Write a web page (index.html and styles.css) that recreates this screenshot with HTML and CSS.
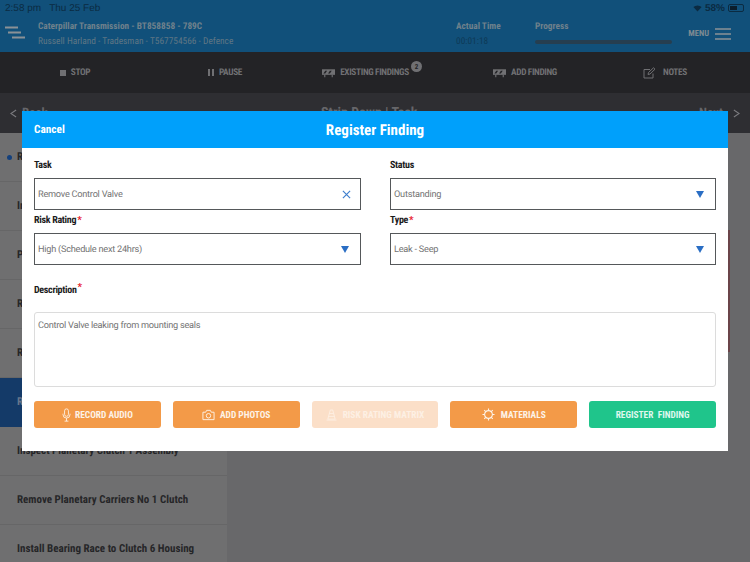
FILE: index.html
```html
<!DOCTYPE html>
<html lang="en">
<head>
    <meta charset="UTF-8">
    <meta name="viewport" content="width=device-width, initial-scale=1.0">
    <title>Register Finding</title>
    <link rel="stylesheet" href="styles.css">
</head>
<body>
    <div class="page">
        <header class="top">
            <div class="status-bar">
                <span class="clock">2:58 pm</span>
                <span class="date">Thu 25 Feb</span>
                <span class="status-right">
                    <svg class="wifi" viewBox="0 0 12 9"><path d="M6 8.5 L0.5 2.6 A8 8 0 0 1 11.5 2.6 Z"/></svg>
                    <span class="battery-text">58%</span>
                    <span class="battery"><span class="battery-fill"></span></span>
                </span>
            </div>
            <div class="job-bar">
                <svg class="job-icon" viewBox="0 0 21 14"><path d="M0 1.5H13M3 6.5H16M7 11.5H20"/></svg>
                <div class="job-text">
                    <div class="job-title">Caterpillar Transmission - BT858858 - 789C</div>
                    <div class="job-sub">Russell Harland - Tradesman - T567754566 - Defence</div>
                </div>
                <div class="time">
                    <div class="job-title">Actual Time</div>
                    <div class="time-value">00:01:18</div>
                </div>
                <div class="progress">
                    <div class="job-title">Progress</div>
                    <div class="progress-track"></div>
                </div>
                <div class="menu">
                    <span>MENU</span>
                    <svg class="menu-icon" viewBox="0 0 16 12"><path d="M0 1H16M0 6H16M0 11H16"/></svg>
                </div>
            </div>
        </header>

        <nav class="toolbar">
            <div class="tool"><span class="stop-icon"></span>STOP</div>
            <div class="tool"><span class="pause-icon"></span>PAUSE</div>
            <div class="tool tool-findings">
                <svg class="barrier" viewBox="0 0 14 10"><path class="solid" d="M0 1H14V7H0Z"/><path class="cut" d="M1.5 5.5H3.5L5.5 2.5H3.5ZM6.5 5.5H8.5L10.5 2.5H8.5Z"/><path class="leg" d="M3 7V9.5M11 7V9.5"/></svg>
                EXISTING FINDINGS
                <span class="badge">2</span>
            </div>
            <div class="tool">
                <svg class="barrier" viewBox="0 0 14 10"><path class="solid" d="M0 1H14V7H0Z"/><path class="cut" d="M1.5 5.5H3.5L5.5 2.5H3.5ZM6.5 5.5H8.5L10.5 2.5H8.5Z"/><path class="leg" d="M3 7V9.5M11 7V9.5"/></svg>
                ADD FINDING
            </div>
            <div class="tool tool-notes">
                <svg class="notes-icon" viewBox="0 0 13 12"><path d="M10 6.5V11H1V2.5H7"/><path d="M5 7.5L5.5 5.5L10.5 .8L12 2.2L7 7Z"/></svg>
                NOTES
            </div>
        </nav>

        <div class="subheader">
            <div class="sub-side">
                <svg class="chevron" viewBox="0 0 8 10"><path d="M7 1L1 5L7 9"/></svg>
                <span>Back</span>
            </div>
            <div class="sub-title">Strip Down | Task</div>
            <div class="sub-side">
                <span>Next</span>
                <svg class="chevron" viewBox="0 0 8 10"><path d="M1 1L7 5L1 9"/></svg>
            </div>
        </div>

        <div class="content">
            <ul class="task-list">
                <li class="task task-current"><span class="dot"></span>R</li>
                <li class="task">In</li>
                <li class="task">P</li>
                <li class="task">R</li>
                <li class="task">R</li>
                <li class="task task-selected">R</li>
                <li class="task">Inspect Planetary Clutch 1 Assembly</li>
                <li class="task">Remove Planetary Carriers No 1 Clutch</li>
                <li class="task">Install Bearing Race to Clutch 6 Housing</li>
            </ul>
            <div class="main-panel">
                <div class="alert-card"></div>
            </div>
        </div>
    </div>

    <!-- Modal -->
    <div class="modal">
        <div class="modal-head">
            <span class="cancel">Cancel</span>
            <span class="modal-title">Register Finding</span>
        </div>
        <div class="modal-body">
            <div class="form-grid">
                <div class="field">
                    <label>Task</label>
                    <div class="input">
                        Remove Control Valve
                        <svg class="clear" viewBox="0 0 10 10"><path d="M1 1L9 9M9 1L1 9"/></svg>
                    </div>
                </div>
                <div class="field">
                    <label>Status</label>
                    <div class="input">Outstanding<span class="arrow"></span></div>
                </div>
                <div class="field">
                    <label>Risk Rating<span class="req">*</span></label>
                    <div class="input">High (Schedule next 24hrs)<span class="arrow"></span></div>
                </div>
                <div class="field">
                    <label>Type<span class="req">*</span></label>
                    <div class="input">Leak - Seep<span class="arrow"></span></div>
                </div>
            </div>
            <label class="desc-label">Description<span class="req req-high">*</span></label>
            <div class="textarea">Control Valve leaking from mounting seals</div>
            <div class="actions">
                <button class="btn">
                    <svg class="btn-icon mic" viewBox="0 0 10 16"><rect x="2.8" y="1" width="4.4" height="8.5" rx="2.2"/><path d="M1 6.5V7.5A4 4 0 0 0 9 7.5V6.5M5 11.5V15M2.8 15H7.2"/></svg>
                    RECORD AUDIO
                </button>
                <button class="btn">
                    <svg class="btn-icon camera" viewBox="0 0 14 12"><path d="M1 3H4L5 1H9L10 3H13V11H1Z"/><circle cx="7" cy="6.8" r="2.4"/></svg>
                    ADD PHOTOS
                </button>
                <button class="btn btn-disabled">
                    <svg class="btn-icon cone" viewBox="0 0 12 13"><path d="M4.7 1H7.3L10 11H2ZM.5 12H11.5M3.6 5H8.4M3 8H9"/></svg>
                    RISK RATING MATRIX
                </button>
                <button class="btn">
                    <svg class="btn-icon gear" viewBox="0 0 14 14"><circle cx="7" cy="7" r="4.2"/><path d="M7 .5V2.8M7 11.2V13.5M.5 7H2.8M11.2 7H13.5M2.4 2.4L4 4M10 10L11.6 11.6M11.6 2.4L10 4M4 10L2.4 11.6"/></svg>
                    MATERIALS
                </button>
                <button class="btn btn-green">REGISTER&nbsp; FINDING</button>
            </div>
        </div>
    </div>
</body>
</html>
```

FILE: styles.css
```css
* {
    box-sizing: border-box;
}
html, body {
    margin: 0;
    padding: 0;
}
body {
    width: 750px;
    height: 562px;
    overflow: hidden;
    position: relative;
    background-color: #68686a;
    font-family: 'Roboto Condensed', 'Roboto', sans-serif;
    font-stretch: 75%;
    text-rendering: geometricPrecision;
}
.page {
    display: flex;
    flex-direction: column;
    height: 562px;
    overflow: hidden;
}

/* Header */
.top {
    flex: none;
    height: 52px;
    background-color: #11507a;
}
.status-bar {
    height: 15px;
    display: flex;
    align-items: center;
    padding: 1px 5px 0;
    font-family: 'Liberation Sans', sans-serif;
    font-stretch: 100%;
    font-size: 10px;
    color: #0b2b42;
}
.date {
    margin-left: 8px;
}
.status-right {
    margin-left: auto;
    display: flex;
    align-items: center;
    gap: 3px;
    font-weight: bold;
    font-size: 10px;
}
.wifi {
    width: 9px;
    height: 7px;
    fill: #0b2b42;
}
.battery {
    width: 16px;
    height: 8px;
    border: 1px solid #0b2b42;
    border-radius: 2px;
    padding: 1px;
    margin-right: 1px;
}
.battery-fill {
    display: block;
    width: 58%;
    height: 100%;
    background-color: #0b1d2b;
}
.job-bar {
    height: 37px;
    display: flex;
    align-items: center;
    padding-left: 5px;
    padding-right: 19px;
}
.job-icon {
    width: 21px;
    height: 14px;
    margin-top: -1px;
    fill: none;
    stroke: #8b9196;
    stroke-width: 2;
}
.job-text {
    margin-left: 12px;
    width: 418px;
}
.job-title {
    font-size: 9.3px;
    font-weight: bold;
    line-height: 15px;
    color: #6f818c;
}
.job-sub {
    font-size: 9.4px;
    line-height: 15px;
    color: #5f7684;
}
.time {
    width: 79px;
}
.time-value {
    font-size: 9.4px;
    line-height: 15px;
    color: #0e3a57;
}
.progress {
    width: 137px;
}
.progress-track {
    height: 4px;
    margin-top: 6px;
    margin-bottom: 5px;
    border-radius: 2px;
    background-color: #263e50;
}
.menu {
    margin-left: auto;
    display: flex;
    align-items: center;
    gap: 6px;
    font-size: 8.5px;
    font-weight: bold;
    color: #7d8a92;
}
.menu-icon {
    width: 16px;
    height: 12px;
    fill: none;
    stroke: #8b9196;
    stroke-width: 1.4;
}

/* Toolbar */
.toolbar {
    flex: none;
    height: 41px;
    display: flex;
    background-color: #232326;
}
.tool {
    flex: 0 0 150px;
    display: flex;
    align-items: center;
    justify-content: center;
    gap: 5px;
    font-size: 9.3px;
    letter-spacing: -0.35px;
    font-weight: bold;
    color: #707073;
}
.tool-findings {
    padding-right: 20px;
}
.tool-notes {
    padding-right: 20px;
    gap: 7px;
}
.stop-icon {
    width: 6px;
    height: 6px;
    background-color: #707073;
}
.pause-icon {
    width: 6px;
    height: 7px;
    border-left: 2px solid #707073;
    border-right: 2px solid #707073;
}
.barrier {
    width: 13px;
    height: 10px;
}
.barrier .solid {
    fill: #707073;
}
.barrier .cut {
    fill: #232326;
}
.barrier .leg {
    fill: none;
    stroke: #707073;
    stroke-width: 1.2;
}
.notes-icon {
    width: 13px;
    height: 12px;
    fill: none;
    stroke: #707073;
    stroke-width: 1;
}
.badge {
    width: 11px;
    height: 11px;
    margin-left: -3px;
    margin-top: -12px;
    margin-right: -14px;
    border-radius: 50%;
    display: flex;
    align-items: center;
    justify-content: center;
    background-color: #707073;
    color: #232326;
    font-size: 7px;
}

/* Sub header */
.subheader {
    flex: none;
    height: 40px;
    display: flex;
    align-items: center;
    justify-content: space-between;
    padding: 0 10px;
    background-color: #2e2e32;
    color: #66666a;
    font-size: 13px;
    font-weight: bold;
}
.sub-side {
    display: flex;
    align-items: center;
    gap: 5px;
}
.sub-side:last-child {
    gap: 10px;
}
.chevron {
    width: 7px;
    height: 9px;
    fill: none;
    stroke: #7c7c80;
    stroke-width: 1.2;
}
.sub-title {
    margin-right: 8px;
    font-size: 14px;
}

/* Task list */
.content {
    flex: none;
    display: flex;
}
.task-list {
    list-style: none;
    width: 227px;
    margin: 0;
    padding: 0;
    background-color: #6f6f70;
}
.task {
    position: relative;
    height: 49px;
    display: flex;
    align-items: center;
    padding-left: 17px;
    padding-bottom: 2px;
    font-size: 11px;
    font-weight: bold;
    color: #262628;
    border-bottom: 1px solid #666667;
}
.task-selected {
    background-color: #143a68;
    color: #66768c;
    border-bottom: none;
}
.dot {
    position: absolute;
    left: 7px;
    top: 22px;
    width: 5px;
    height: 5px;
    border-radius: 50%;
    background-color: #14407c;
}
.main-panel {
    flex: 1;
    padding: 97px 0 0 0;
}
.alert-card {
    width: 502px;
    margin-left: 1px;
    height: 122px;
    background-color: #68686a;
    border-right: 2px solid #6a4449;
}

/* Modal */
.modal {
    position: absolute;
    left: 22px;
    top: 111px;
    width: 706px;
    height: 340px;
    background-color: #fff;
}
.modal-head {
    position: relative;
    height: 37px;
    display: flex;
    align-items: center;
    justify-content: center;
    background-color: #00a0fb;
    color: #fff;
    font-weight: bold;
}
.cancel {
    position: absolute;
    left: 12px;
    font-size: 11.3px;
}
.modal-title {
    font-size: 15px;
}
.modal-body {
    padding: 11px 12px 0;
}
.form-grid {
    display: grid;
    grid-template-columns: 327px 326px;
    column-gap: 29px;
    row-gap: 4px;
}
.field label, .desc-label {
    display: block;
    height: 19px;
    line-height: 14px;
    font-size: 10px;
    letter-spacing: -0.3px;
    font-weight: bold;
    color: #1c1c1c;
}
.req {
    color: #e8202c;
    margin-left: 1px;
    font-size: 10px;
}
.req-high {
    position: relative;
    top: -3px;
}
.input {
    height: 32px;
    display: flex;
    align-items: center;
    justify-content: space-between;
    padding: 1px 9px 0 3px;
    border: 1px solid #55585a;
    font-family: 'Roboto', sans-serif;
    font-stretch: 100%;
    font-size: 9.2px;
    letter-spacing: -0.25px;
    color: #737373;
}
.clear {
    width: 9px;
    height: 9px;
    fill: none;
    stroke: #3f7fce;
    stroke-width: 1.3;
}
.arrow {
    width: 0;
    height: 0;
    margin-right: 2px;
    border-left: 4.5px solid transparent;
    border-right: 4.5px solid transparent;
    border-top: 7px solid #2a6ec4;
}
.desc-label {
    margin-top: 19px;
    height: 28px;
}
.textarea {
    height: 75px;
    padding: 7px 3px;
    border: 1px solid #dcdcdc;
    border-radius: 3px;
    font-family: 'Roboto', sans-serif;
    font-stretch: 100%;
    font-size: 9.2px;
    letter-spacing: -0.25px;
    color: #737373;
}
.actions {
    display: flex;
    gap: 12px;
    margin-top: 14px;
}
.btn {
    flex: 1;
    height: 27px;
    display: flex;
    align-items: center;
    justify-content: center;
    gap: 4px;
    padding: 0;
    border: none;
    border-radius: 3px;
    background-color: #f39a48;
    color: #fdf3e8;
    font-family: inherit;
    font-stretch: inherit;
    font-size: 9.4px;
    font-weight: bold;
}
.btn-disabled {
    background-color: #fbdfc8;
    color: #fdf0e4;
}
.btn-green {
    background-color: #1fc58b;
    color: #dff7ee;
}
.btn-icon {
    fill: none;
    stroke: currentColor;
    stroke-width: 1;
}
.mic {
    width: 9px;
    height: 14px;
}
.camera {
    width: 13px;
    height: 12px;
    margin-right: 1px;
}
.cone {
    width: 11px;
    height: 12px;
    margin-right: 2px;
}
.gear {
    width: 13px;
    height: 13px;
    margin-right: 2px;
    stroke-width: 1.2;
}
```
